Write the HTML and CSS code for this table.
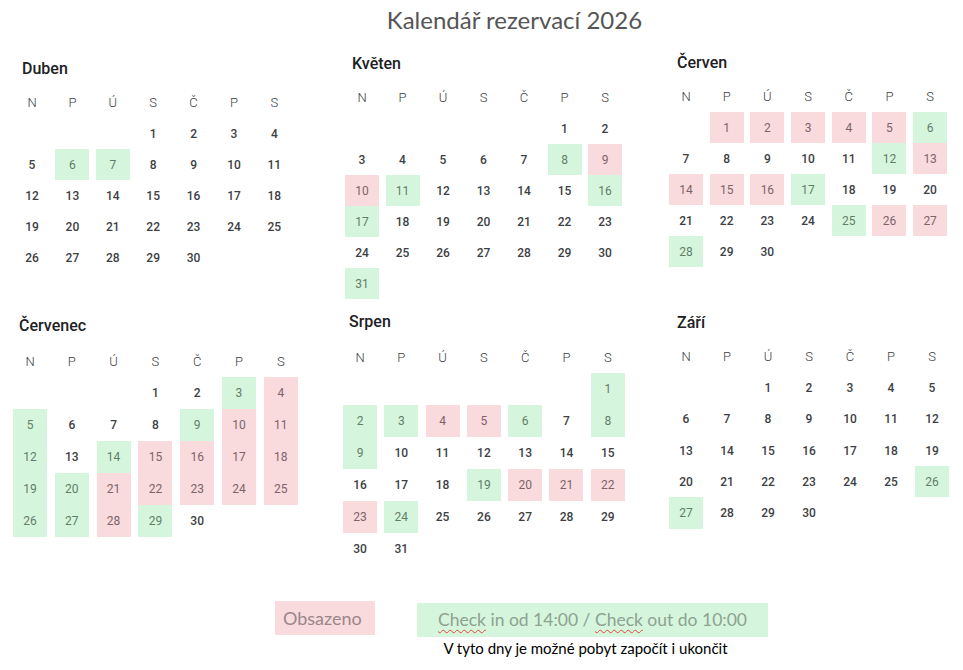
FILE: index.html
```html
<!DOCTYPE html>
<html lang="cs">
<head>
<meta charset="utf-8">
<title>Kalendář rezervací 2026</title>
<link rel="stylesheet" href="styles.css">
</head>
<body>
<div class="page">
  <h1 class="title">Kalendář rezervací 2026</h1>
  <div class="months">
    <section class="month m-duben">
      <h2 class="mname">Duben</h2>
      <div class="grid dow"><span>N</span><span>P</span><span>Ú</span><span>S</span><span>Č</span><span>P</span><span>S</span></div>
      <div class="grid days">
        <span class="d c4">1</span><span class="d">2</span><span class="d">3</span><span class="d">4</span>
        <span class="d">5</span><span class="d g">6</span><span class="d g">7</span><span class="d">8</span><span class="d">9</span><span class="d">10</span><span class="d">11</span>
        <span class="d">12</span><span class="d">13</span><span class="d">14</span><span class="d">15</span><span class="d">16</span><span class="d">17</span><span class="d">18</span>
        <span class="d">19</span><span class="d">20</span><span class="d">21</span><span class="d">22</span><span class="d">23</span><span class="d">24</span><span class="d">25</span>
        <span class="d">26</span><span class="d">27</span><span class="d">28</span><span class="d">29</span><span class="d">30</span>
      </div>
    </section>
    <section class="month m-kveten">
      <h2 class="mname">Květen</h2>
      <div class="grid dow"><span>N</span><span>P</span><span>Ú</span><span>S</span><span>Č</span><span>P</span><span>S</span></div>
      <div class="grid days">
        <span class="d c6">1</span><span class="d">2</span>
        <span class="d">3</span><span class="d">4</span><span class="d">5</span><span class="d">6</span><span class="d">7</span><span class="d g">8</span><span class="d r">9</span>
        <span class="d r">10</span><span class="d g">11</span><span class="d">12</span><span class="d">13</span><span class="d">14</span><span class="d">15</span><span class="d g">16</span>
        <span class="d g">17</span><span class="d">18</span><span class="d">19</span><span class="d">20</span><span class="d">21</span><span class="d">22</span><span class="d">23</span>
        <span class="d">24</span><span class="d">25</span><span class="d">26</span><span class="d">27</span><span class="d">28</span><span class="d">29</span><span class="d">30</span>
        <span class="d g">31</span>
      </div>
    </section>
    <section class="month m-cerven">
      <h2 class="mname">Červen</h2>
      <div class="grid dow"><span>N</span><span>P</span><span>Ú</span><span>S</span><span>Č</span><span>P</span><span>S</span></div>
      <div class="grid days">
        <span class="d r c2">1</span><span class="d r">2</span><span class="d r">3</span><span class="d r">4</span><span class="d r">5</span><span class="d g">6</span>
        <span class="d">7</span><span class="d">8</span><span class="d">9</span><span class="d">10</span><span class="d">11</span><span class="d g">12</span><span class="d r">13</span>
        <span class="d r">14</span><span class="d r">15</span><span class="d r">16</span><span class="d g">17</span><span class="d">18</span><span class="d">19</span><span class="d">20</span>
        <span class="d">21</span><span class="d">22</span><span class="d">23</span><span class="d">24</span><span class="d g">25</span><span class="d r">26</span><span class="d r">27</span>
        <span class="d g">28</span><span class="d">29</span><span class="d">30</span>
      </div>
    </section>
    <section class="month m-cervenec">
      <h2 class="mname">Červenec</h2>
      <div class="grid dow"><span>N</span><span>P</span><span>Ú</span><span>S</span><span>Č</span><span>P</span><span>S</span></div>
      <div class="grid days">
        <span class="d c4">1</span><span class="d">2</span><span class="d g">3</span><span class="d r">4</span>
        <span class="d g">5</span><span class="d">6</span><span class="d">7</span><span class="d">8</span><span class="d g">9</span><span class="d r">10</span><span class="d r">11</span>
        <span class="d g">12</span><span class="d">13</span><span class="d g">14</span><span class="d r">15</span><span class="d r">16</span><span class="d r">17</span><span class="d r">18</span>
        <span class="d g">19</span><span class="d g">20</span><span class="d r">21</span><span class="d r">22</span><span class="d r">23</span><span class="d r">24</span><span class="d r">25</span>
        <span class="d g">26</span><span class="d g">27</span><span class="d r">28</span><span class="d g">29</span><span class="d">30</span>
      </div>
    </section>
    <section class="month m-srpen">
      <h2 class="mname">Srpen</h2>
      <div class="grid dow"><span>N</span><span>P</span><span>Ú</span><span>S</span><span>Č</span><span>P</span><span>S</span></div>
      <div class="grid days">
        <span class="d g c7">1</span>
        <span class="d g">2</span><span class="d g">3</span><span class="d r">4</span><span class="d r">5</span><span class="d g">6</span><span class="d">7</span><span class="d g">8</span>
        <span class="d g">9</span><span class="d">10</span><span class="d">11</span><span class="d">12</span><span class="d">13</span><span class="d">14</span><span class="d">15</span>
        <span class="d">16</span><span class="d">17</span><span class="d">18</span><span class="d g">19</span><span class="d r">20</span><span class="d r">21</span><span class="d r">22</span>
        <span class="d r">23</span><span class="d g">24</span><span class="d">25</span><span class="d">26</span><span class="d">27</span><span class="d">28</span><span class="d">29</span>
        <span class="d">30</span><span class="d">31</span>
      </div>
    </section>
    <section class="month m-zari">
      <h2 class="mname">Září</h2>
      <div class="grid dow"><span>N</span><span>P</span><span>Ú</span><span>S</span><span>Č</span><span>P</span><span>S</span></div>
      <div class="grid days">
        <span class="d c3">1</span><span class="d">2</span><span class="d">3</span><span class="d">4</span><span class="d">5</span>
        <span class="d">6</span><span class="d">7</span><span class="d">8</span><span class="d">9</span><span class="d">10</span><span class="d">11</span><span class="d">12</span>
        <span class="d">13</span><span class="d">14</span><span class="d">15</span><span class="d">16</span><span class="d">17</span><span class="d">18</span><span class="d">19</span>
        <span class="d">20</span><span class="d">21</span><span class="d">22</span><span class="d">23</span><span class="d">24</span><span class="d">25</span><span class="d g">26</span>
        <span class="d g">27</span><span class="d">28</span><span class="d">29</span><span class="d">30</span>
      </div>
    </section>
  </div>
  <div class="legend">
    <div class="lg-busy">Obsazeno</div>
    <div class="lg-free">
      <div class="lg-free-box"><span class="sp">Check</span> in od 14:00 / <span class="sp">Check</span> out do 10:00</div>
      <div class="lg-note">V tyto dny je možné pobyt započít i ukončit</div>
    </div>
  </div>
</div>
</body>
</html>
```
FILE: styles.css
```css
* { box-sizing: border-box; }
html, body { margin: 0; padding: 0; background: #fff; }
body { font-family: Roboto, "Noto Sans", sans-serif; }

.page { width: 963px; height: 670px; overflow: hidden; }

.title {
  margin: 0;
  height: 40px;
  line-height: 40px;
  padding-left: 66px;
  text-align: center;
  font-family: Lato, "Open Sans", sans-serif;
  font-weight: 400;
  font-size: 24px;
  color: #555;
}

.months {
  display: grid;
  grid-template-columns: 330px 326px 307px;
  grid-template-rows: 260px 290px;
}

.month {
  --gap: 6.5px;
  --row: 31px;
  padding-left: 15px;
}
.mname {
  margin: 0 0 8px 7px;
  height: 20px;
  line-height: 20px;
  font-size: 16px;
  font-weight: 500;
  color: #202124;
}

.grid {
  display: grid;
  grid-template-columns: repeat(7, 34px);
  column-gap: var(--gap);
  grid-auto-rows: var(--row);
}
.dow span {
  display: flex;
  align-items: center;
  justify-content: center;
  font-size: 13px;
  font-weight: 300;
  color: #3c4043;
}
.d {
  display: flex;
  align-items: center;
  justify-content: center;
  font-size: 12px;
  font-weight: 500;
  color: #3c4043;
}
.d.g { background: #d5f6dc; color: #637c68; font-weight: 400; }
.d.r { background: #f9dadd; color: #7c6466; font-weight: 400; }

.c2 { grid-column-start: 2; }
.c3 { grid-column-start: 3; }
.c4 { grid-column-start: 4; }
.c6 { grid-column-start: 6; }
.c7 { grid-column-start: 7; }

.m-duben { padding-top: 19px; }
.m-duben .grid { --gap: 6.4px; }
.m-kveten { padding-top: 14px; }
.m-cerven { padding-top: 13px; padding-left: 13px; }
.m-cerven .mname { margin-left: 8px; }
.m-cerven .grid { --gap: 6.7px; }
.m-cervenec { padding-top: 16px; padding-left: 13px; }
.m-cervenec .mname { margin-left: 6px; margin-bottom: 9px; }
.m-cervenec .grid { --gap: 7.8px; --row: 32px; }
.m-srpen { padding-top: 12px; padding-left: 13px; }
.m-srpen .mname { margin-left: 6px; margin-bottom: 9px; }
.m-srpen .grid { --gap: 7.3px; --row: 32px; }
.m-zari { padding-top: 13px; padding-left: 13px; }
.m-zari .mname { margin-left: 8px; }
.m-zari .grid { --gap: 7px; --row: 31.3px; }

.legend {
  display: flex;
  align-items: flex-start;
  gap: 42px;
  padding-left: 275px;
  margin-top: 11px;
  font-family: Lato, "Open Sans", sans-serif;
}
.lg-busy {
  width: 100px;
  height: 34px;
  line-height: 34px;
  padding-left: 8px;
  background: #f9dadd;
  color: #9a8789;
  font-size: 18px;
}
.lg-free { display: flex; flex-direction: column; align-items: center; margin-top: 2px; }
.lg-free-box {
  width: 351px;
  height: 34px;
  line-height: 34px;
  text-align: center;
  background: #d5f6dc;
  color: #8ea192;
  font-size: 17.5px;
}
.sp {
  text-decoration: underline wavy #e0483e;
  text-decoration-thickness: 1px;
  text-underline-offset: 3px;
}
.lg-note {
  margin-top: 2px;
  margin-right: 14px;
  font-size: 15px;
  line-height: 18px;
  color: #000;
}
```
